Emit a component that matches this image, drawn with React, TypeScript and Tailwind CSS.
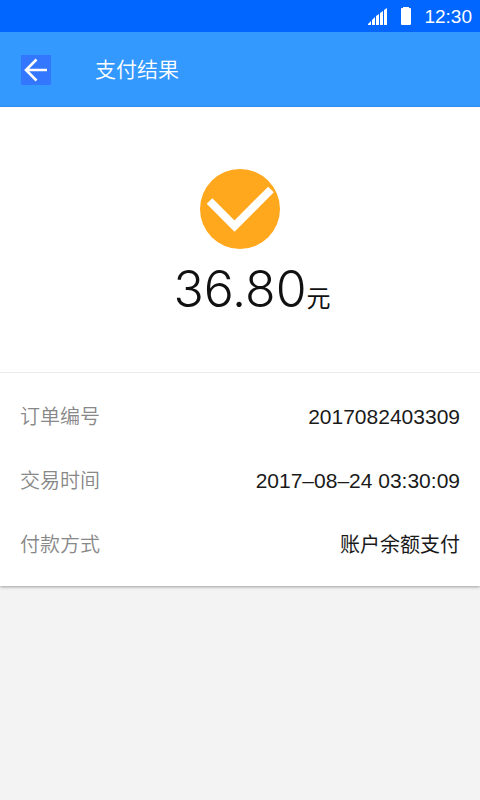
import React from "react";

const orderInfo = [
  { label: "订单编号", value: "2017082403309", size: "text-[21px]" },
  { label: "交易时间", value: "2017–08–24 03:30:09", size: "text-[21px]" },
  { label: "付款方式", value: "账户余额支付", size: "text-xl" },
];

function StatusBar() {
  return (
    <div className="flex h-8 items-center justify-end bg-[#0066ff] pr-2 text-white">
      <svg className="mr-3 h-5 w-5" viewBox="0 0 20 20" fill="currentColor" aria-hidden="true">
        <path d="M0 19v-1l3-3v4zM4 19v-5l3-3v8zM8 19v-9l3-2v11zM12 19V7l3-2v14zM16 19V4l3-2v17z" />
      </svg>
      <svg className="mr-3 h-5 w-3" viewBox="0 0 12 20" fill="currentColor" aria-hidden="true">
        <path d="M3 1h6v1h1q1 0 1 1v15q0 1-1 1H2q-1 0-1-1V3q0-1 1-1h1z" />
      </svg>
      <span className="text-[19px] leading-none">12:30</span>
    </div>
  );
}

function Header() {
  return (
    <header className="flex h-[75px] items-center gap-11 bg-[#3399ff] px-[21px] text-white">
      <button type="button" aria-label="返回" className="bg-[#3377ff]">
        <svg className="h-[30px] w-[30px]" viewBox="0 0 30 30" fill="none" stroke="currentColor" strokeWidth="2.6">
          <path d="M26 15H5.500M15.500 4.500L5 15L15.500 25.500" />
        </svg>
      </button>
      <h1 className="text-[21px] font-[350]">支付结果</h1>
    </header>
  );
}

export default function App() {
  return (
    <div className="min-h-screen bg-[#f3f3f3] font-['Liberation_Sans','Noto_Sans_CJK_SC',sans-serif]">
      <StatusBar />
      <Header />
      <main className="bg-white shadow-[0_1px_3px_rgba(0,0,0,0.35)]">
        <section className="flex flex-col items-center border-b border-[#ebebeb] pt-[62px] pb-[52px]">
          <svg className="h-20 w-20" viewBox="0 0 80 80" fill="none" aria-hidden="true">
            <circle cx="40" cy="40" r="40" fill="#ffa81d" />
            <path d="M9.500 32L34.500 57L71 20.500" stroke="#fff" strokeWidth="8" />
          </svg>
          <p className="mt-[10px] mb-[1px] ml-6 flex items-baseline text-[#111]">
            <span className="font-['Inter'] text-[50px] leading-[60px] font-[350]">36.80</span>
            <span className="text-2xl">元</span>
          </p>
        </section>
        <dl className="px-5 pt-3 pb-[9px]">
          {orderInfo.map((item) => (
            <div key={item.label} className="flex h-16 items-center justify-between">
              <dt className="text-xl font-[350] text-[#888]">{item.label}</dt>
              <dd className={`text-[#1a1a1a] ${item.size}`}>{item.value}</dd>
            </div>
          ))}
        </dl>
      </main>
    </div>
  );
}
